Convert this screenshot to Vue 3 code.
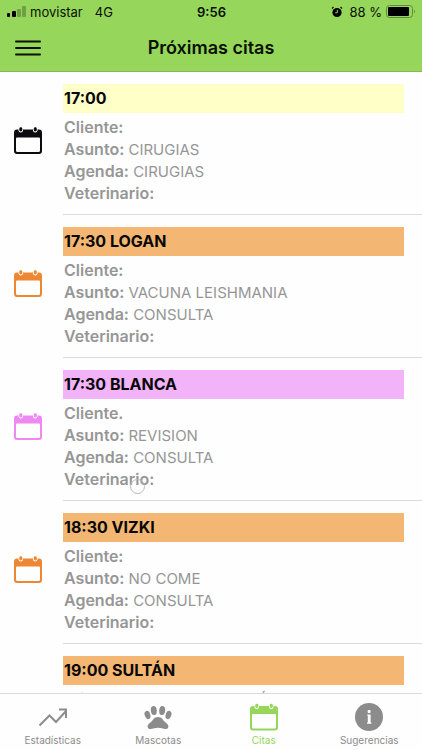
<template>
  <div class="app">
    <header class="header">
      <div class="status-bar">
        <div class="status-left">
          <svg class="signal" viewBox="0 0 19 12">
            <rect x="0" y="7" width="3" height="4" rx="1" />
            <rect x="5" y="5" width="4" height="6" rx="1" />
            <rect x="10" y="3" width="4" height="8" rx="1" opacity="0.25" />
            <rect x="15" y="0" width="4" height="11" rx="1" opacity="0.25" />
          </svg>
          <span>movistar</span>
          <span class="network">4G</span>
        </div>

        <span class="clock">9:56</span>

        <div class="status-right">
          <svg class="alarm" viewBox="0 0 12 12">
            <circle cx="6" cy="6.5" r="4.6" />
            <path d="M1 2.5 L2.5 1 M11 2.5 L9.5 1" stroke="#101808" stroke-width="1.3" />
            <path d="M6.3 3.8 V6.8 H4.2" fill="none" stroke="#95d65b" stroke-width="1" />
          </svg>
          <span>88 %</span>
          <svg class="battery" viewBox="0 0 30 14">
            <rect x="0.5" y="0.5" width="26" height="12" rx="3" fill="none" stroke="#62893f" />
            <rect x="2" y="2" width="21" height="9" rx="1" />
            <path d="M28 4.5 Q30 6.5 28 8.5 Z" fill="#62893f" />
          </svg>
        </div>
      </div>

      <div class="toolbar">
        <button class="menu-button" type="button" aria-label="Menú">
          <svg viewBox="0 0 26 16">
            <path d="M1 1.5 H25 M1 8 H25 M1 14.5 H25" stroke="#0b1005" stroke-width="2" stroke-linecap="round" />
          </svg>
        </button>
        <h1>Próximas citas</h1>
      </div>
    </header>

    <main class="content">
      <article v-for="(cita, index) in citas" :key="index" class="cita">
        <div class="cita-icon" :class="cita.tipo">
          <svg class="calendar" viewBox="0 0 28 27">
            <use href="#calendar-shape" />
          </svg>
        </div>

        <div class="cita-body">
          <h2 :class="cita.tipo">{{ cita.hora }} {{ cita.mascota }}</h2>
          <p><strong>{{ cita.etiqueta || "Cliente:" }}</strong> {{ cita.cliente }}</p>
          <p><strong>Asunto:</strong> {{ cita.asunto }}</p>
          <p><strong>Agenda:</strong> {{ cita.agenda }}</p>
          <p>
            <strong>Veterinario:</strong>
            <span v-if="cita.pulsado" class="touch"></span>
          </p>
        </div>
      </article>
    </main>

    <nav class="tabs">
      <a href="#estadisticas" class="tab">
        <svg viewBox="0 0 28 28">
          <path d="M0.5 22.5 L10.5 12.5 L17 19 L27.5 7.5 M20 6.5 H27 V15" fill="none" stroke="currentColor" stroke-width="2" />
        </svg>
        <span>Estadísticas</span>
      </a>

      <a href="#mascotas" class="tab">
        <svg viewBox="0 0 28 28">
          <g fill="currentColor">
            <ellipse cx="3.5" cy="12" rx="2.8" ry="4.2" transform="rotate(-18 3.5 12)" />
            <ellipse cx="9.8" cy="7.5" rx="3" ry="4.6" transform="rotate(-6 9.8 7.5)" />
            <ellipse cx="18.2" cy="7.5" rx="3" ry="4.6" transform="rotate(6 18.2 7.5)" />
            <ellipse cx="24.5" cy="12" rx="2.8" ry="4.2" transform="rotate(18 24.5 12)" />
            <path d="M14 14 C18 14 19 17 20.5 18.5 C23 20.5 25 22 24.3 24.2 C23.5 26.7 20.5 26.2 18 25.3 C15.5 24.6 12.5 24.6 10 25.3 C7.5 26.2 4.5 26.7 3.7 24.2 C3 22 5 20.5 7.5 18.5 C9 17 10 14 14 14 Z" />
          </g>
        </svg>
        <span>Mascotas</span>
      </a>

      <a href="#citas" class="tab active">
        <svg viewBox="0 0 28 27">
          <g id="calendar-shape">
            <path d="M3 2.5 H25 Q28 2.5 28 5.5 V24 Q28 27 25 27 H3 Q0 27 0 24 V5.5 Q0 2.5 3 2.5 Z M3 10.5 Q2 10.5 2 11.5 V23.5 Q2 25 3.5 25 H24.5 Q26 25 26 23.5 V11.5 Q26 10.5 25 10.5 Z" fill="currentColor" fill-rule="evenodd" />
            <rect x="4.5" y="-1" width="4.5" height="6.5" rx="2.2" fill="#fff" />
            <rect x="19" y="-1" width="4.5" height="6.5" rx="2.2" fill="#fff" />
            <rect x="5.3" y="0.3" width="3" height="4.2" rx="1.4" fill="currentColor" />
            <rect x="19.8" y="0.3" width="3" height="4.2" rx="1.4" fill="currentColor" />
          </g>
        </svg>
        <span>Citas</span>
      </a>

      <a href="#sugerencias" class="tab">
        <svg viewBox="0 0 28 28">
          <circle cx="14" cy="14" r="14" fill="currentColor" />
          <rect x="12.6" y="7" width="3" height="3" rx="1" fill="#fff" />
          <path d="M12.2 11.5 H15.6 V19.5 H16.4 V20.8 H12 V19.5 H12.8 V12.6 H12.2 Z" fill="#fff" />
        </svg>
        <span>Sugerencias</span>
      </a>
    </nav>
  </div>
</template>

<script setup>
const citas = [
  { hora: "17:00", mascota: "", tipo: "cirugia", asunto: "CIRUGIAS", agenda: "CIRUGIAS" },
  { hora: "17:30", mascota: "LOGAN", tipo: "consulta", asunto: "VACUNA LEISHMANIA", agenda: "CONSULTA" },
  {
    hora: "17:30",
    mascota: "BLANCA",
    tipo: "revision",
    etiqueta: "Cliente.",
    asunto: "REVISION",
    agenda: "CONSULTA",
    pulsado: true,
  },
  { hora: "18:30", mascota: "VIZKI", tipo: "consulta", asunto: "NO COME", agenda: "CONSULTA" },
  { hora: "19:00", mascota: "SULTÁN", tipo: "consulta", cliente: "FRANCISCO GARCÍA", agenda: "CONSULTA" },
];
</script>

<style>
body {
  margin: 0;
  background: #fff;
}
</style>

<style scoped>
.app {
  display: flex;
  flex-direction: column;
  height: 100vh;
  overflow: hidden;
  background: #fefefe;
  font-family: Inter, "Liberation Sans", sans-serif;
}

.header {
  flex: none;
  background: #95d65b;
  border-bottom: 1px solid #84b757;
  color: #0b1005;
}

.status-bar {
  display: grid;
  grid-template-columns: 1fr auto 1fr;
  align-items: center;
  height: 24px;
  padding: 0 6px 0 7px;
  font-size: 13px;
  line-height: 24px;
}

.status-left,
.status-right {
  display: flex;
  align-items: center;
}

.status-right {
  justify-content: flex-end;
  gap: 4px;
}

.signal {
  width: 19px;
  height: 12px;
  margin-right: 4px;
}

.network {
  margin-left: 12px;
}

.clock {
  font-weight: 600;
}

.alarm {
  width: 12px;
  height: 12px;
  margin-right: 2px;
}

.battery {
  width: 30px;
  height: 14px;
}

.toolbar {
  display: grid;
  grid-template-columns: 56px 1fr 56px;
  align-items: center;
  height: 47px;
}

.menu-button {
  display: flex;
  padding: 0 0 0 15px;
  border: 0;
  background: none;
}

.menu-button svg {
  width: 26px;
  height: 16px;
}

h1 {
  margin: 0;
  font-size: 18px;
  font-weight: 600;
  text-align: center;
}

.content {
  flex: 1;
  min-height: 0;
  overflow: hidden;
}

.cita {
  display: flex;
}

.cita-icon {
  display: flex;
  flex: none;
  align-items: center;
  justify-content: center;
  width: 56px;
  margin-right: 7px;
  padding-bottom: 6px;
}

.calendar {
  width: 28px;
  height: 27px;
}

.cita-icon.cirugia {
  color: #0a0a0f;
}

.cita-icon.consulta {
  color: #ee8734;
}

.cita-icon.revision {
  color: #ee88f2;
}

.cita-body {
  flex: 1;
  padding: 12px 0 9px;
  border-bottom: 1px solid #dcdcdc;
}

h2 {
  margin: 0 18px 4px 0;
  padding-left: 1px;
  font-size: 16px;
  font-weight: 700;
  line-height: 29px;
  color: #080808;
}

h2.cirugia {
  background: #ffffc8;
}

h2.consulta {
  background: #f3b673;
}

h2.revision {
  background: #f2b3f9;
}

p {
  position: relative;
  margin: 0;
  padding-left: 1px;
  font-size: 15px;
  line-height: 22px;
  color: #969696;
}

strong {
  font-size: 16px;
  font-weight: 600;
  line-height: 20px;
}

.touch {
  position: absolute;
  top: 10px;
  left: 67px;
  width: 13px;
  height: 13px;
  border: 1px solid #b9b9c6;
  border-radius: 50%;
}

.tabs {
  display: flex;
  flex: none;
  height: 56px;
  border-top: 1px solid #dadada;
  background: #fefefe;
}

.tab {
  display: flex;
  flex: 1 1 0;
  flex-direction: column;
  align-items: center;
  gap: 1px;
  padding-top: 9px;
  font-size: 10px;
  line-height: 16px;
  color: #8c8c8c;
  text-decoration: none;
}

.tab svg {
  width: 28px;
  height: 28px;
}

.tab.active {
  color: #95d65b;
}
</style>
